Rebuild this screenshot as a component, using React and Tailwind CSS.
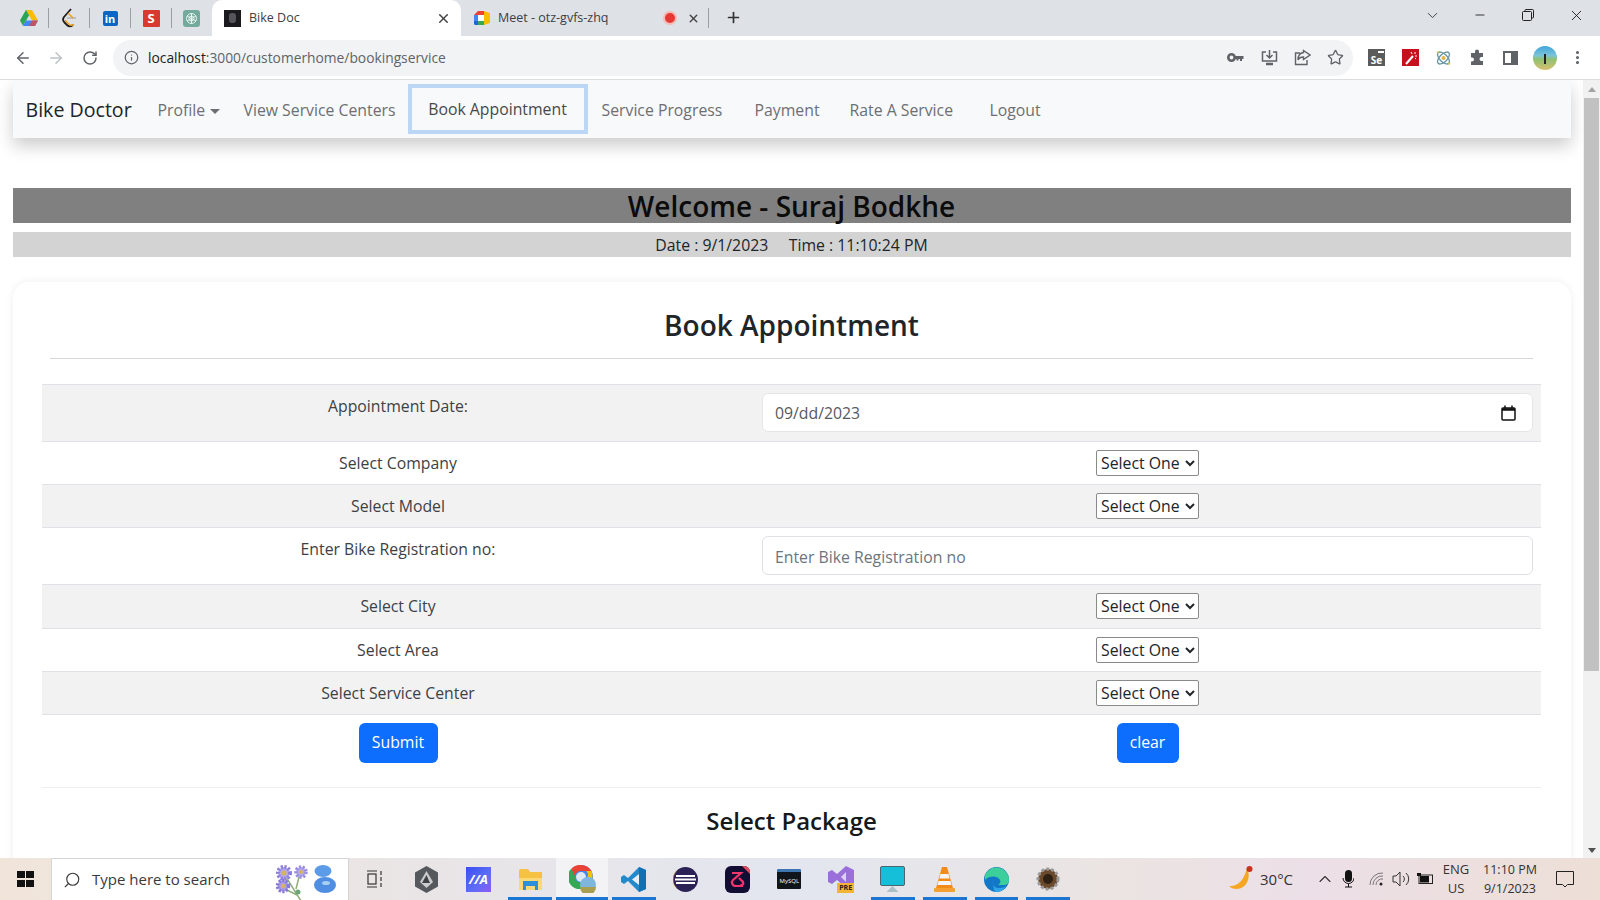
import React from 'react'
import { ArrowLeft, ArrowRight, RotateCw, Info, Star, X, Plus, ChevronDown, Minus, ChevronUp, Search, MoreVertical } from 'lucide-react'

const font = { fontFamily: '"Open Sans", "Noto Sans", sans-serif' }

function Drive() {
  return (
    <svg width="18" height="16" viewBox="0 0 18 16">
      <path d="M6 0h6l6 10.500h-6z" fill="#fbbc04" />
      <path d="M6 0l3 5.300L3 16 0 10.500z" fill="#34a853" />
      <path d="M6 10.500h12L15 16H3z" fill="#4285f4" />
      <path d="M6 0l3 5.300-3 5.200H0z" fill="#1f9e57" opacity="0.4" />
      <path d="M12 10.500h6L15 16H9z" fill="#ea4335" opacity="0.75" />
    </svg>
  )
}

function Leet() {
  return (
    <svg width="16" height="20" viewBox="0 0 16 20" fill="none">
      <path d="M10 1 3 9c-1.500 2-1 4 .5 5.500L6 17c1.500 1.500 4 1.500 6 0" stroke="#1c1c1c" strokeWidth="1.800" />
      <path d="M6 10h9" stroke="#b3b3b3" strokeWidth="1.500" />
      <path d="M7 5l5 5" stroke="#f0a020" strokeWidth="1.500" />
      <path d="M4 12l4 4.500c1.500 1 3 1 5 0" stroke="#f0a020" strokeWidth="1.500" />
    </svg>
  )
}

function Favicons() {
  return (
    <div className="flex items-center h-full">
      <div className="w-[38px] flex justify-end pl-[11px]"><Drive /></div>
      <div className="ml-[10px] w-px h-[20px] bg-[#9aa0a6]" />
      <div className="w-[40px] flex justify-center"><Leet /></div>
      <div className="w-px h-[20px] bg-[#9aa0a6]" />
      <div className="w-[40px] flex justify-center">
        <div className="w-[15px] h-[15px] bg-[#0a66c2] rounded-[2px] flex items-center justify-center text-white text-[11px] font-bold leading-none">in</div>
      </div>
      <div className="w-px h-[20px] bg-[#9aa0a6]" />
      <div className="w-[40px] flex justify-center">
        <div className="w-[17px] h-[17px] bg-[#d93a30] rounded-[1px] flex items-center justify-center text-white text-[13px] font-bold leading-none">S</div>
      </div>
      <div className="w-px h-[20px] bg-[#9aa0a6]" />
      <div className="w-[38px] flex justify-center">
        <div className="w-[17px] h-[17px] bg-[#74aa9c] rounded-[3px] flex items-center justify-center">
          <svg width="13" height="13" viewBox="0 0 13 13" fill="none" stroke="#e8f3ef" strokeWidth="1"><circle cx="6.500" cy="6.500" r="5" /><circle cx="6.500" cy="6.500" r="2.500" /><path d="M2 4l9 5M11 4l-9 5M6.500 1v11" /></svg>
        </div>
      </div>
    </div>
  )
}

function TabBar() {
  return (
    <div className="h-[36px] bg-[#dee1e6] flex items-stretch shrink-0 text-[#3c4043] relative">
      <div className="w-[212px]"><Favicons /></div>
      <div className="w-[249px] bg-white rounded-t-[10px] flex items-center pl-[12px] pr-[10px]">
        <div className="w-[17px] h-[17px] bg-[#1b1b1f] flex items-center justify-center">
          <div className="w-[7px] h-[10px] bg-[#55555c] rounded-[3px]" />
        </div>
        <span className="ml-[8px] text-[12.500px]">Bike Doc</span>
        <X size={15} strokeWidth={2.4} className="ml-auto text-[#444]" />
      </div>
      <div className="w-[248px] flex items-center pl-[13px]">
        <svg width="16" height="14" viewBox="0 0 16 14">
          <path d="M0 4 4 0h6v4z" fill="#ea4335" />
          <path d="M0 4h4v6H0z" fill="#4285f4" />
          <path d="M0 10h4v4H1.500A1.500 1.500 0 0 1 0 12.500z" fill="#1967d2" />
          <path d="M4 10h6v4H4z" fill="#34a853" />
          <path d="M10 0v5l0 4v5L16 12V2z" fill="#fbbc04" />
          <path d="M4 4h6v6H4z" fill="#fff" />
        </svg>
        <span className="ml-[8px] text-[12.500px]">Meet - otz-gvfs-zhq</span>
        <div className="ml-auto w-[14px] h-[14px] rounded-full bg-[#e53935] border-[2px] border-[#f6b9b4]" />
        <X size={13} strokeWidth={2.6} className="ml-[10px] text-[#444]" />
        <div className="ml-[8px] w-px h-[20px] bg-[#9aa0a6]" />
      </div>
      <div className="w-[48px] flex items-center justify-center pb-[1px]"><Plus size={17} strokeWidth={2.4} className="text-[#333]" /></div>
      <div className="flex-1 flex items-center justify-end pb-[6px]">
        <ChevronDown size={17} strokeWidth={1.4} className="mr-[32px] text-[#444]" />
        <Minus size={14} strokeWidth={1.4} className="mr-[35px] text-[#111]" />
        <svg width="12" height="12" viewBox="0 0 12 12" fill="none" stroke="#222" className="mr-[34px]"><rect x="0.500" y="2.500" width="9" height="9" rx="1" /><path d="M3 2.500V1.500a1 1 0 0 1 1-1h6.500a1 1 0 0 1 1 1V8a1 1 0 0 1-1 1h-1" /></svg>
        <X size={17} strokeWidth={1.2} className="mr-[15px] text-[#111]" />
      </div>
    </div>
  )
}

function AddressBar() {
  return (
    <div className="h-[44px] bg-white border-b border-[#dadce0] flex items-center shrink-0 text-[#5f6368]">
      <ArrowLeft size={18} className="ml-[14px]" />
      <ArrowRight size={18} className="ml-[15px] text-[#bdc1c6]" />
      <RotateCw size={16} strokeWidth={2.2} className="ml-[17px]" />
      <div className="ml-[15px] w-[1240px] h-[36px] rounded-full bg-[#f1f3f4] flex items-center pl-[11px]">
        <Info size={15} strokeWidth={2} />
        <span className="ml-[9px] pt-[2px] text-[13.800px] text-[#5f6368]"><span className="text-[#202124]">localhost</span>:3000/customerhome/bookingservice</span>
        <div className="ml-auto flex items-center gap-[16px] pr-[9px]">
          <svg width="18" height="17" viewBox="0 0 17 17" fill="#5f6368" className="mr-[1px]"><circle cx="5" cy="8.500" r="3.200" fill="none" stroke="#5f6368" strokeWidth="2.600" /><path d="M8 7h9v3h-1.500v2h-2v-2h-1.500v1.500H10V10H8z" /></svg>
          <svg width="17" height="17" viewBox="0 0 17 17" fill="none" stroke="#5f6368" strokeWidth="1.500"><path d="M5 3H1.500v9h14V3H12" /><path d="M8.500 1v7.500M5.500 6l3 3 3-3" /><path d="M5 15h7" strokeWidth="2.500" /></svg>
          <svg width="17" height="17" viewBox="0 0 17 17" fill="none" stroke="#5f6368" strokeWidth="1.400"><path d="M6 4H1.500v11.500H13V11" /><path d="M9.500 1.500 16 6l-6.500 4.500V8C6.500 8 5 9 4 11c0-4 2-7 5.500-7.500z" /></svg>
          <Star size={17} strokeWidth={1.8} />
        </div>
      </div>
      <div className="ml-[15px] w-[17px] h-[17px] bg-[#5b5b5b] flex flex-col text-white text-[10px] font-bold leading-none justify-between pb-[1px]">
        <div className="self-end w-[6px] h-[2px] bg-white mt-[2px] mr-[1px]" />
        <div className="text-center">Se</div>
      </div>
      <div className="ml-[17px] w-[17px] h-[17px] bg-[#c8101d] flex items-center justify-center">
        <svg width="14" height="14" viewBox="0 0 14 14" stroke="#fff" strokeWidth="2"><path d="M2 13 9 5" /><path d="M11 1v2M13 5h-2M7 1l1 2M12 8l-1-1" strokeWidth="1" /></svg>
      </div>
      <div className="ml-[16px] w-[17px] h-[17px] flex items-center justify-center">
        <svg width="20" height="20" viewBox="0 0 18 18" fill="none" stroke="#6b97a5" strokeWidth="1.500"><ellipse cx="9" cy="9" rx="8" ry="4" transform="rotate(45 9 9)" /><ellipse cx="9" cy="9" rx="8" ry="4" transform="rotate(-45 9 9)" /><circle cx="9" cy="9" r="2.200" fill="#e3b341" stroke="none" /><circle cx="3" cy="3" r="1.200" fill="#d9c35c" stroke="none" /><circle cx="15" cy="15" r="1.200" fill="#d9c35c" stroke="none" /></svg>
      </div>
      <div className="ml-[17px] w-[17px] h-[17px]">
        <svg width="17" height="17" viewBox="0 0 17 17" fill="#5f6368"><path d="M6 2.500a2 2 0 0 1 4 0V4h4v4h-1.500a2 2 0 0 0 0 4H14v4H2v-3.500h1a2 2 0 0 0 0-4H2V4h4z" /></svg>
      </div>
      <div className="ml-[17px] w-[15px] h-[14px] border-[2px] border-[#5f6368] border-r-[7px]" />
      <div className="ml-[15px] w-[24px] h-[24px] rounded-full bg-[linear-gradient(180deg,#3fa5dc_0%,#7cc4d8_40%,#8fc26f_55%,#d8c070_100%)] flex items-center justify-center">
        <div className="w-[2px] h-[10px] bg-[#222] mt-[3px]" />
      </div>
      <MoreVertical size={17} strokeWidth={2.4} className="ml-[12px]" />
    </div>
  )
}

function NavBar() {
  return (
    <nav className="h-[58px] bg-[#f8f9fa] shadow-[0_8px_16px_rgba(0,0,0,0.2)] flex items-center text-[15.800px] text-[#6d6f72] relative">
      <span className="ml-[13px] mt-[1px] text-[19.600px] text-[#212529] w-[119px]">Bike Doctor</span>
      <span className="ml-[13px] mt-[3px] w-[86px] flex items-center">
        Profile
        <span className="ml-[5px] mt-[1px] border-t-[5px] border-x-[5px] border-t-[#6d6f72] border-x-transparent" />
      </span>
      <span className="w-[164px] mt-[3px]">View Service Centers</span>
      <span className="h-[50px] w-[180px] border-[4px] border-[#bcd6f5] flex items-center justify-center text-[#46494c] pt-[2px]">Book Appointment</span>
      <span className="ml-[14px] mt-[3px] w-[153px]">Service Progress</span>
      <span className="w-[95px] mt-[3px]">Payment</span>
      <span className="w-[140px] mt-[3px]">Rate A Service</span>
      <span className="mt-[3px]">Logout</span>
    </nav>
  )
}

function SelectOne() {
  return (
    <select className="w-[103px] h-[26px] border border-[#8a8a8a] rounded-[2px] bg-white text-[15.800px] text-[#212529] outline-none" style={font}>
      <option>Select One</option>
    </select>
  )
}

function Row({ label, striped, tall, children }) {
  return (
    <div className={`grid grid-cols-[712px_1fr] border-b border-[#dee2e6] ${striped ? 'bg-[#f2f2f2]' : 'bg-white'}`}>
      <div className={`px-2 py-2 text-center text-[#3d4145] leading-[26px] ${tall ? 'h-[56px]' : 'h-[42.200px]'}`}>{label}</div>
      <div className={`px-2 py-2 flex justify-center ${tall ? 'h-[56px]' : 'h-[42.200px]'}`}>{children}</div>
    </div>
  )
}

function BookForm() {
  return (
    <div className="mt-[25px] rounded-[16px] bg-white shadow-[0_0_8px_rgba(0,0,0,0.07)] h-[600px] px-[29.500px] overflow-hidden">
      <h1 className="mt-[19px] h-[48px] leading-[48px] text-center text-[28px] font-semibold text-[#212529]">Book Appointment</h1>
      <div className="mx-[8px] mt-[9px] border-t border-[#d5d7d9]" />
      <div className="mt-[25px] border-t border-[#dee2e6] text-[15.800px]">
        <Row label="Appointment Date:" striped tall>
          <div className="w-full h-[39px] bg-white border border-[#e3e6e9] rounded-[6px] flex items-center px-[12px] pt-[2px] text-[#55595d]">
            09/dd/2023
            <svg width="15" height="16" viewBox="0 0 15 16" className="ml-auto mr-[4px] -mt-[2px]" fill="none" stroke="#111"><rect x="1" y="3" width="13" height="12" rx="1" strokeWidth="1.500" /><path d="M1 4.500h13" strokeWidth="2.500" /><path d="M4 0.500v3M11 0.500v3" strokeWidth="1.500" /></svg>
          </div>
        </Row>
        <Row label="Select Company"><SelectOne /></Row>
        <Row label="Select Model" striped><SelectOne /></Row>
        <Row label="Enter Bike Registration no:" tall>
          <input placeholder="Enter Bike Registration no" className="w-full h-[39px] bg-white border border-[#dee2e6] rounded-[6px] px-[12px] pt-[2px] placeholder:text-[#6c757d] outline-none" />
        </Row>
        <Row label="Select City" striped><SelectOne /></Row>
        <Row label="Select Area"><SelectOne /></Row>
        <Row label="Select Service Center" striped><SelectOne /></Row>
        <div className="grid grid-cols-[712px_1fr] h-[73px] border-b border-[#eceef0] pt-[8px]">
          <div className="flex justify-center"><button className="w-[79px] h-[40px] rounded-[6px] bg-[#0d6efd] text-white">Submit</button></div>
          <div className="flex justify-center"><button className="w-[62px] h-[40px] rounded-[6px] bg-[#0d6efd] text-white">clear</button></div>
        </div>
      </div>
      <h2 className="mt-[16px] text-center text-[24px] leading-[34px] font-semibold text-[#16181a]">Select Package</h2>
    </div>
  )
}

function ScrollBar() {
  return (
    <div className="w-[17px] bg-[#f1f1f1] flex flex-col items-center shrink-0">
      <div className="h-[18px] flex items-center justify-center">
        <span className="border-b-[5px] border-x-[4px] border-b-[#a3a3a3] border-x-transparent" />
      </div>
      <div className="w-[15px] h-[573px] bg-[#c1c1c1]" />
      <div className="mt-auto h-[16px] flex items-center justify-center">
        <span className="border-t-[5px] border-x-[4px] border-t-[#505050] border-x-transparent" />
      </div>
    </div>
  )
}

function Slot({ bar, active, children }) {
  return (
    <div className={`w-[51.800px] h-full flex flex-col items-center justify-center relative shrink-0 ${active ? 'bg-white/50' : ''}`}>
      {children}
      {bar && <div className={`absolute bottom-0 h-[3px] bg-[#1a76d2] ${active ? 'inset-x-0' : 'inset-x-[4px]'}`} />}
    </div>
  )
}

function TaskIcons() {
  return (
    <>
      <Slot>
        <svg width="23" height="27" viewBox="0 0 23 27"><path d="M11.500 0 23 6.500v14L11.500 27 0 20.500v-14z" fill="#55585c" /><path d="M11.500 5 18 16l-6.500 6L5 16z" fill="#c9cbce" /><path d="M11.500 9 15 17H7z" fill="#3e4145" /></svg>
      </Slot>
      <Slot>
        <div className="w-[25px] h-[25px] bg-[linear-gradient(135deg,#3a4ff0,#5a6cf7_55%,#8d5cf5)] flex items-center justify-center text-white text-[13px] font-bold italic leading-none">//A</div>
      </Slot>
      <Slot bar>
        <svg width="23" height="21" viewBox="0 0 23 21"><path d="M0 2a2 2 0 0 1 2-2h7l2 3h12v18H0z" fill="#f5c242" /><path d="M0 9h23v12H0z" fill="#fcd978" /><path d="M4 12h15v9h-3v-4H7v4H4z" fill="#2b90d9" /></svg>
      </Slot>
      <Slot bar active>
        <svg width="27" height="28" viewBox="0 0 27 28">
          <circle cx="12" cy="12" r="12" fill="#4285f4" />
          <path d="M12 0a12 12 0 0 1 10.400 6H12a6 6 0 0 0-6 5L2 4a12 12 0 0 1 10-4z" fill="#ea4335" />
          <path d="M22.400 6a12 12 0 0 1-6 16l-4-6a6 6 0 0 0 5-10z" fill="#fbbc04" />
          <path d="M2 4a12 12 0 0 0 10 20l4-8a6 6 0 0 1-10-5z" fill="#34a853" />
          <circle cx="12" cy="12" r="5" fill="#dfe8f5" />
          <circle cx="19" cy="20" r="8" fill="#7fb6dc" />
          <path d="M11 22h16a8 8 0 0 1-16 0z" fill="#a8a050" />
        </svg>
      </Slot>
      <Slot bar>
        <svg width="25" height="25" viewBox="0 0 25 25"><path d="M18 0 25 3v19l-7 3L7 14l-4 3-3-2V10l3-2 4 3z" fill="#2489ca" /><path d="M18 0 25 3v19l-7 3z" fill="#1070b3" /><path d="M18 7v11l-7-5.500z" fill="#e9eef6" /></svg>
      </Slot>
      <Slot>
        <svg width="25" height="25" viewBox="0 0 25 25"><circle cx="12.500" cy="12.500" r="12.500" fill="#2c2255" /><path d="M0 12.500A12.500 12.500 0 0 1 6 1.800 13 13 0 0 0 6 23.200 12.500 12.500 0 0 1 0 12.500" fill="#f0a33c" /><path d="M3 9h19M2 12.500h21M3 16h19" stroke="#fff" strokeWidth="1.800" /></svg>
      </Slot>
      <Slot>
        <svg width="25" height="27" viewBox="0 0 25 27"><rect width="25" height="27" rx="6" fill="#120d33" /><path d="M17 0h2a6 6 0 0 1 6 6v2z" fill="#e24a5f" /><path d="M7 7h9L8 14c-2 2-1 6 3 6h7M14 12l4 4c1 2-1 4-3 3" fill="none" stroke="#f0366b" strokeWidth="2.200" /></svg>
      </Slot>
      <Slot>
        <div className="w-[24px] h-[20px] bg-[#10151c] border-t-[3px] border-[#3d75b0] rounded-[1px] flex items-center justify-center text-white text-[6px] leading-none">MySQL</div>
      </Slot>
      <Slot>
        <div className="relative w-[26px] h-[27px]">
          <svg width="26" height="22" viewBox="0 0 26 22"><path d="M18 0 26 4v14l-8 4-9-8-5 4-4-2V6l4-2 5 4z" fill="#9a6fdc" /><path d="M18 6v10l-5-5z" fill="#ddd0f5" /></svg>
          <div className="absolute bottom-0 right-0 px-[2px] bg-[#f2b632] text-[7px] font-bold text-[#222] leading-[10px]">PRE</div>
        </div>
      </Slot>
      <Slot bar>
        <svg width="25" height="27" viewBox="0 0 25 27"><rect x="0.500" y="0.500" width="24" height="19" rx="1.500" fill="#16bfd9" stroke="#4a6670" strokeWidth="1" /><path d="M12.500 20l6 6h-12z" fill="#a9c0c8" /></svg>
      </Slot>
      <Slot bar>
        <svg width="21" height="25" viewBox="0 0 21 25"><path d="M8 0h5l6 21H2z" fill="#f28b1c" /><path d="M6.500 7h8l1.200 4.500H5.300zM4.500 14h12l1 4h-14z" fill="#f5f5f5" /><rect y="21" width="21" height="4" rx="1" fill="#f5a030" /></svg>
      </Slot>
      <Slot bar>
        <svg width="25" height="25" viewBox="0 0 25 25">
          <circle cx="12.500" cy="12.500" r="12.500" fill="#1377c8" />
          <path d="M1 8a12.500 12.500 0 0 1 24 5c0 3-2 5-5 5h-6c2-1 3-3 2-5-2-4-10-5-15 0z" fill="#3ccf9c" />
          <path d="M9 14c-1 4 2 8 7 7 3 0 5-1 6-2-2 4-6 6-10 6-2 0-3-5-3-11z" fill="#2fa6e8" />
        </svg>
      </Slot>
      <Slot bar>
        <svg width="24" height="24" viewBox="0 0 24 24"><circle cx="12" cy="12" r="10" fill="#6b4a2c" stroke="#9a9a9a" strokeWidth="3" strokeDasharray="3 2" /><circle cx="12" cy="12" r="5" fill="#2e2013" /></svg>
      </Slot>
    </>
  )
}

function Flowers() {
  return (
    <svg width="70" height="42" viewBox="0 0 70 42">
      <path d="M15 18 30 42M30 10 25 30M14 30l12 6" stroke="#8fae7c" strokeWidth="1.500" fill="none" />
      <circle cx="13" cy="14" r="6" fill="#b3a8ee" stroke="#8c7fdc" strokeWidth="4" strokeDasharray="2 1.500" /><circle cx="13" cy="14" r="2.500" fill="#d7b45c" />
      <circle cx="30" cy="13" r="5" fill="#b3a8ee" stroke="#9a8ee4" strokeWidth="3.500" strokeDasharray="2 1.500" /><circle cx="30" cy="13" r="2" fill="#d7b45c" />
      <circle cx="12" cy="27" r="5.500" fill="#a99dea" stroke="#8376d6" strokeWidth="3.500" strokeDasharray="2 1.500" /><circle cx="12" cy="27" r="2.200" fill="#d7b45c" />
      <circle cx="27" cy="33" r="2.500" fill="#6ea579" />
      <ellipse cx="52" cy="12" rx="8.500" ry="6" fill="#5c9be8" />
      <ellipse cx="54" cy="26" rx="11" ry="8" fill="#4f8ee2" />
      <ellipse cx="55" cy="24" rx="4" ry="2" fill="#a8cff5" />
    </svg>
  )
}

function TaskBar() {
  return (
    <div className="h-[42px] shrink-0 flex items-stretch bg-[linear-gradient(90deg,#f1e5da_0%,#e8e5e8_30%,#e3e6ef_50%,#ebe4e2_70%,#ecdfe7_82%,#eddfd6_100%)] text-[#222]">
      <div className="w-[51px] flex items-center justify-center">
        <div className="grid grid-cols-2 gap-[1.500px] w-[17px] h-[16px]">
          <div className="bg-[#111]" /><div className="bg-[#111]" /><div className="bg-[#111]" /><div className="bg-[#111]" />
        </div>
      </div>
      <div className="w-[298px] bg-white border-t border-x border-[#d5d5d5] flex items-center pl-[11px] text-[15px] text-[#3a3a3a]">
        <Search size={18} strokeWidth={1.5} className="-scale-x-100" />
        <span className="ml-[11px]">Type here to search</span>
        <div className="ml-auto mr-[7px] overflow-hidden h-full"><Flowers /></div>
      </div>
      <Slot>
        <svg width="18" height="18" viewBox="0 0 18 18" fill="none" stroke="#333" strokeWidth="1.200"><path d="M1 1h10M1 17h10" /><rect x="2" y="4" width="8" height="10" /><path d="M15 1v4M15 7v4M15 13v4" /></svg>
      </Slot>
      <TaskIcons />
      <div className="flex-1" />
      <div className="flex items-center text-[#333] pr-[26px]">
        <svg width="26" height="26" viewBox="0 0 26 26" className="mr-[5px]"><path d="M18 2c4 8 1 21-11 21-3 0-5-1-7-3 9 1 15-6 18-18" fill="#f5a623" /><circle cx="20.500" cy="3" r="3" fill="#c8321f" /></svg>
        <span className="text-[15px] w-[32px] whitespace-nowrap">30°C</span>
        <ChevronUp size={20} strokeWidth={1.300} className="ml-[23px]" />
        <svg width="12" height="18" viewBox="0 0 12 18" fill="#111" className="ml-[7px]"><rect x="3" y="0" width="7" height="12" rx="3.500" /><path d="M1 8a5.500 5.500 0 0 0 11 0M6.500 14v3M3 17h7" stroke="#111" fill="none" /></svg>
        <svg width="15" height="14" viewBox="0 0 15 14" fill="none" stroke="#777" className="ml-[15px]"><path d="M1 13A12 12 0 0 1 14 1M4 13a9 9 0 0 1 10-9M7 13a6 6 0 0 1 7-6" /><circle cx="12" cy="12" r="1.500" fill="#222" stroke="none" /></svg>
        <svg width="18" height="16" viewBox="0 0 18 16" fill="none" stroke="#333" className="ml-[8px]"><path d="M1 5h3l4-4v14l-4-4H1zM11 5a4 4 0 0 1 0 6M14 2a8 8 0 0 1 0 12" /></svg>
        <svg width="17" height="12" viewBox="0 0 17 12" className="ml-[7px]"><rect x="2" y="2" width="13.500" height="8.500" fill="none" stroke="#222" /><rect x="3" y="3" width="9" height="6.500" fill="#111" /><path d="M0 0h4v3H0z" fill="#111" /></svg>
        <div className="ml-[10px] w-[24px] flex flex-col items-center text-[13px] leading-[19px]"><span>ENG</span><span>US</span></div>
        <div className="ml-[16px] w-[52px] flex flex-col items-center text-[12.500px] leading-[19px] whitespace-nowrap"><span>11:10 PM</span><span>9/1/2023</span></div>
        <svg width="18" height="17" viewBox="0 0 18 17" fill="none" stroke="#222" className="ml-[20px]"><path d="M.5.500h17v13h-6l-2.500 2.500-2.500-2.500h-6z" /></svg>
      </div>
    </div>
  )
}

export default function App() {
  return (
    <div className="w-[1600px] h-[900px] flex flex-col overflow-hidden bg-white" style={font}>
      <TabBar />
      <AddressBar />
      <div className="flex-1 flex min-h-0">
        <div className="flex-1 px-[12.500px] overflow-hidden text-[16px] text-[#212529]">
          <NavBar />
          <div className="mt-[50px] h-[35px] bg-[#808080] text-center text-[28px] leading-[37px] font-semibold text-[#0b0b0b]">Welcome - Suraj Bodkhe</div>
          <div className="mt-[9px] h-[25px] bg-[#d3d3d3] text-center text-[15.800px] leading-[26px] text-[#212529] whitespace-pre">Date : 9/1/2023{'\u00a0\u00a0\u00a0\u00a0\u00a0'}Time : 11:10:24 PM</div>
          <BookForm />
        </div>
        <ScrollBar />
      </div>
      <TaskBar />
    </div>
  )
}
